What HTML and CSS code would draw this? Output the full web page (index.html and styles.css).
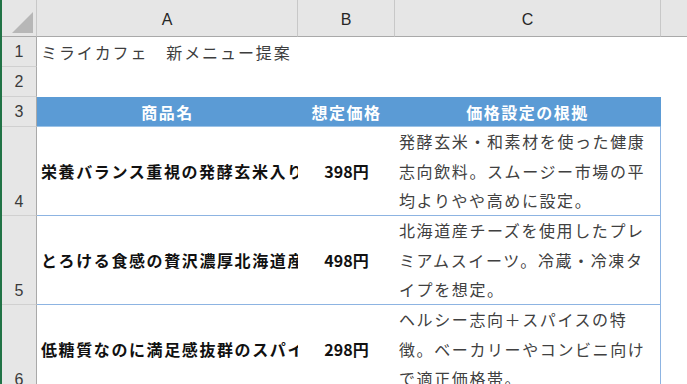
FILE: index.html
```html
<!DOCTYPE html>
<html lang="ja">
<head>
<meta charset="utf-8">
<title>ミライカフェ 新メニュー提案</title>
<link rel="stylesheet" href="styles.css">
</head>
<body>
<div class="window">
  <div class="edge"></div>
  <div class="sheet">
    <div class="corner"><span class="tri"></span></div>
    <div class="colhead">A</div>
    <div class="colhead">B</div>
    <div class="colhead">C</div>
    <div class="colhead last"></div>

    <div class="rowhead">1</div>
    <div class="cell title">ミライカフェ　新メニュー提案</div>
    <div class="cell"></div>
    <div class="cell"></div>
    <div class="cell"></div>

    <div class="rowhead">2</div>
    <div class="cell"></div>
    <div class="cell"></div>
    <div class="cell"></div>
    <div class="cell"></div>

    <div class="rowhead">3</div>
    <div class="cell th">商品名</div>
    <div class="cell th">想定価格</div>
    <div class="cell th thc">価格設定の根拠</div>
    <div class="cell"></div>

    <div class="rowhead tall">4</div>
    <div class="cell name trow">栄養バランス重視の発酵玄米入りスムージー</div>
    <div class="cell price trow">398円</div>
    <div class="cell note trow tc">発酵玄米・和素材を使った健康志向飲料。スムージー市場の平均よりやや高めに設定。</div>
    <div class="cell"></div>

    <div class="rowhead tall">5</div>
    <div class="cell name trow">とろける食感の贅沢濃厚北海道産チーズケーキ</div>
    <div class="cell price trow">498円</div>
    <div class="cell note trow tc">北海道産チーズを使用したプレミアムスイーツ。冷蔵・冷凍タイプを想定。</div>
    <div class="cell"></div>

    <div class="rowhead tall">6</div>
    <div class="cell name trow">低糖質なのに満足感抜群のスパイスカレーパン</div>
    <div class="cell price trow">298円</div>
    <div class="cell note trow tc">ヘルシー志向＋スパイスの特徴。ベーカリーやコンビニ向けで適正価格帯。</div>
    <div class="cell"></div>
  </div>
</div>
</body>
</html>
```

FILE: styles.css
```css
html, body {
  margin: 0;
  padding: 0;
  background: #ffffff;
}

.window {
  display: flex;
  width: 687px;
  height: 384px;
  overflow: hidden;
}

.edge {
  flex: 0 0 2px;
  background: #217346;
}

.sheet {
  flex: 1;
  display: grid;
  grid-template-columns: 35px 261px 97px 266px 1fr;
  grid-template-rows: 37px 30px 30px 30px 89px 89px 89px;
  font-family: "Noto Sans CJK JP", "Noto Sans", sans-serif;
  font-size: 16px;
  color: #3a3a3a;
}

.corner {
  background: #e6e6e6;
  border-right: 1px solid #c8c8c8;
  border-bottom: 1px solid #a9a9a9;
  position: relative;
}

.corner .tri {
  position: absolute;
  right: 3px;
  bottom: 3px;
  width: 0;
  height: 0;
  border-left: 21px solid transparent;
  border-bottom: 21px solid #b7b7b7;
}

.colhead {
  background: #e6e6e6;
  border-right: 1px solid #c8c8c8;
  border-bottom: 1px solid #a9a9a9;
  display: flex;
  align-items: center;
  justify-content: center;
  padding-top: 4px;
  font-family: "Liberation Sans", Arial, sans-serif;
  font-size: 16px;
  color: #262626;
}

.colhead.last {
  border-right: none;
}

.rowhead {
  background: #e6e6e6;
  border-right: 1px solid #a9a9a9;
  border-bottom: 1px solid #d0d0d0;
  display: flex;
  align-items: center;
  justify-content: center;
  font-family: "Liberation Sans", Arial, sans-serif;
  font-size: 16px;
  color: #3a3a3a;
}

.rowhead.tall {
  align-items: flex-end;
  padding-bottom: 4px;
}

.cell {
  min-width: 0;
  box-sizing: border-box;
}

.title {
  display: flex;
  align-items: center;
  padding-left: 4px;
  letter-spacing: 1.9px;
  white-space: nowrap;
  overflow: visible;
  color: #3d3d3d;
}

.th {
  background: #5b9bd5;
  color: #ffffff;
  font-weight: bold;
  display: flex;
  align-items: center;
  justify-content: center;
  letter-spacing: 1.5px;
  border-bottom: 1px solid #9bc2e6;
}

.thc {
  border-right: 1px solid #5b9bd5;
}

.trow {
  border-bottom: 1px solid #8db4e2;
}

.tc {
  border-right: 1px solid #8db4e2;
}

.name {
  display: flex;
  align-items: center;
  padding-left: 4px;
  font-weight: bold;
  color: #111111;
  letter-spacing: 1.6px;
  white-space: nowrap;
  overflow: hidden;
}

.price {
  display: flex;
  align-items: center;
  justify-content: center;
  font-weight: bold;
  color: #111111;
  font-family: "Noto Sans CJK JP", sans-serif;
}

.note {
  padding: 0 4px 0 4px;
  line-height: 29.6px;
  letter-spacing: 1.6px;
  color: #404040;
  overflow: hidden;
}
```
